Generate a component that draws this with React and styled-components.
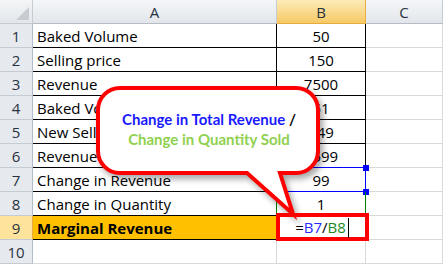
import React from 'react';
import styled, { createGlobalStyle, css } from 'styled-components';

const GlobalStyle = createGlobalStyle`
  html, body {
    margin: 0;
    padding: 0;
    background: #ffffff;
  }
  body {
    font-family: "Open Sans", "Liberation Sans", sans-serif;
  }
`;

const Sheet = styled.div`
  position: relative;
  width: 443px;
  height: 265px;
  overflow: hidden;
  display: grid;
  grid-template-columns: 33px 244px 89px 77px;
  grid-auto-rows: 24px;
  background: #ffffff;
`;

const headerBase = css`
  box-sizing: border-box;
  display: flex;
  align-items: center;
  justify-content: center;
  font-size: 15px;
  color: #27323f;
  border-right: 1px solid #c5cbd3;
  border-bottom: 1px solid #c5cbd3;
`;

const Corner = styled.div`
  ${headerBase};
  position: relative;
  background: linear-gradient(#f3f5f7, #e3e7ec);
  &::after {
    content: '';
    position: absolute;
    right: 3px;
    bottom: 3px;
    border-left: 13px solid transparent;
    border-bottom: 13px solid #c7ccd2;
  }
`;

const ColHeader = styled.div`
  ${headerBase};
  background: ${(p) =>
    p.$active ? 'linear-gradient(#fdebb8, #f7c965)' : 'linear-gradient(#f4f6f8, #e2e6eb)'};
  border-bottom-color: ${(p) => (p.$active ? '#e6ac3f' : '#b3bcc7')};
  border-right-color: ${(p) => (p.$active ? '#e6ac3f' : '#c5cbd3')};
`;

const RowHeader = styled.div`
  ${headerBase};
  background: ${(p) => (p.$active ? '#fde39c' : '#e6e9ee')};
  border-right-color: ${(p) => (p.$active ? '#e6ac3f' : '#b3bcc7')};
`;

const Cell = styled.div`
  position: relative;
  box-sizing: border-box;
  display: flex;
  align-items: center;
  justify-content: ${(p) => (p.$center ? 'center' : 'flex-start')};
  padding: 0 4px;
  font-size: 15px;
  color: #000;
  white-space: nowrap;
  font-weight: ${(p) => (p.$bold ? 700 : 400)};
  background: ${(p) => (p.$fill ? p.$fill : '#ffffff')};
  border-right: 1px solid ${(p) => (p.$boxed ? '#000000' : '#d9d9d9')};
  border-bottom: 1px solid ${(p) => (p.$boxed ? '#000000' : '#d9d9d9')};
`;

const Selection = styled.div`
  position: absolute;
  z-index: 1;
  left: -1px;
  top: -1px;
  right: -1px;
  bottom: -1px;
  border: 1px solid #0000ff;
  pointer-events: none;
  &::before,
  &::after {
    content: '';
    position: absolute;
    right: -4px;
    width: 6px;
    height: 6px;
    background: #0000ff;
  }
  &::before {
    top: -3px;
  }
  &::after {
    bottom: -4px;
  }
`;

const RefMark = styled.div`
  position: absolute;
  z-index: 1;
  left: -1px;
  top: 0;
  right: -1px;
  bottom: 0;
  border-left: 1px solid #008000;
  border-right: 1px solid #008000;
`;

const Highlight = styled.div`
  position: absolute;
  left: -1px;
  top: -3px;
  right: -4px;
  bottom: -2px;
  border: 4px solid #ff0000;
  z-index: 3;
`;

const Formula = styled.span`
  position: relative;
  z-index: 4;
  margin-left: 2px;
  span.b7 {
    color: #2b2bff;
  }
  span.b8 {
    color: #1e8a1e;
  }
`;

const Caret = styled.span`
  display: inline-block;
  width: 1px;
  height: 20px;
  margin-left: 2px;
  vertical-align: middle;
  background: #000;
`;

const CalloutSvg = styled.svg`
  position: absolute;
  left: 0;
  top: 0;
  z-index: 2;
  filter: drop-shadow(3px 4px 3px rgba(0, 0, 0, 0.35));
  pointer-events: none;
`;

const CalloutText = styled.div`
  position: absolute;
  left: 98px;
  top: 88px;
  width: 222px;
  height: 82px;
  z-index: 3;
  display: flex;
  flex-direction: column;
  align-items: center;
  justify-content: center;
  font-family: Lato, "Liberation Sans", sans-serif;
  font-size: 15px;
  font-weight: 700;
  line-height: 20px;
`;

const Blue = styled.span`
  color: #1a1aff;
`;

const Green = styled.span`
  color: #8fd14f;
`;

const rows = [
  ['Baked Volume', '50'],
  ['Selling price', '150'],
  ['Revenue', '7500'],
  ['Baked Volume', '51'],
  ['New Selling price', '149'],
  ['Revenue', '7599'],
  ['Change in Revenue', '99'],
  ['Change in Quantity', '1'],
];

const calloutPath =
  'M 120 88 H 296 A 22 22 0 0 1 318 110 V 151 A 22 22 0 0 1 296 173 H 280 L 293 214 L 247 173 H 120 A 22 22 0 0 1 98 151 V 110 A 22 22 0 0 1 120 88 Z';

const App = () => (
  <>
    <GlobalStyle />
    <Sheet>
      <Corner />
      <ColHeader>A</ColHeader>
      <ColHeader $active>B</ColHeader>
      <ColHeader>C</ColHeader>

      {rows.map(([label, value], i) => (
        <React.Fragment key={i}>
          <RowHeader>{i + 1}</RowHeader>
          <Cell $boxed>{label}</Cell>
          <Cell $boxed $center>
            {value}
            {i === 6 && <Selection />}
            {i === 7 && <RefMark />}
          </Cell>
          <Cell />
        </React.Fragment>
      ))}

      <RowHeader $active>9</RowHeader>
      <Cell $boxed $bold $fill="#ffc000">Marginal Revenue</Cell>
      <Cell $boxed $center>
        <Formula>
          =<span className="b7">B7</span>/<span className="b8">B8</span>
          <Caret />
        </Formula>
        <Highlight />
      </Cell>
      <Cell />

      <RowHeader>10</RowHeader>
      <Cell />
      <Cell />
      <Cell />

      <CalloutSvg width="443" height="265" viewBox="0 0 443 265">
        <path d={calloutPath} fill="#ffffff" stroke="#ff0000" strokeWidth="4" strokeLinejoin="miter" />
      </CalloutSvg>
      <CalloutText>
        <div>
          <Blue>Change in Total Revenue</Blue> /
        </div>
        <Green>Change in Quantity Sold</Green>
      </CalloutText>
    </Sheet>
  </>
);

export default App;
